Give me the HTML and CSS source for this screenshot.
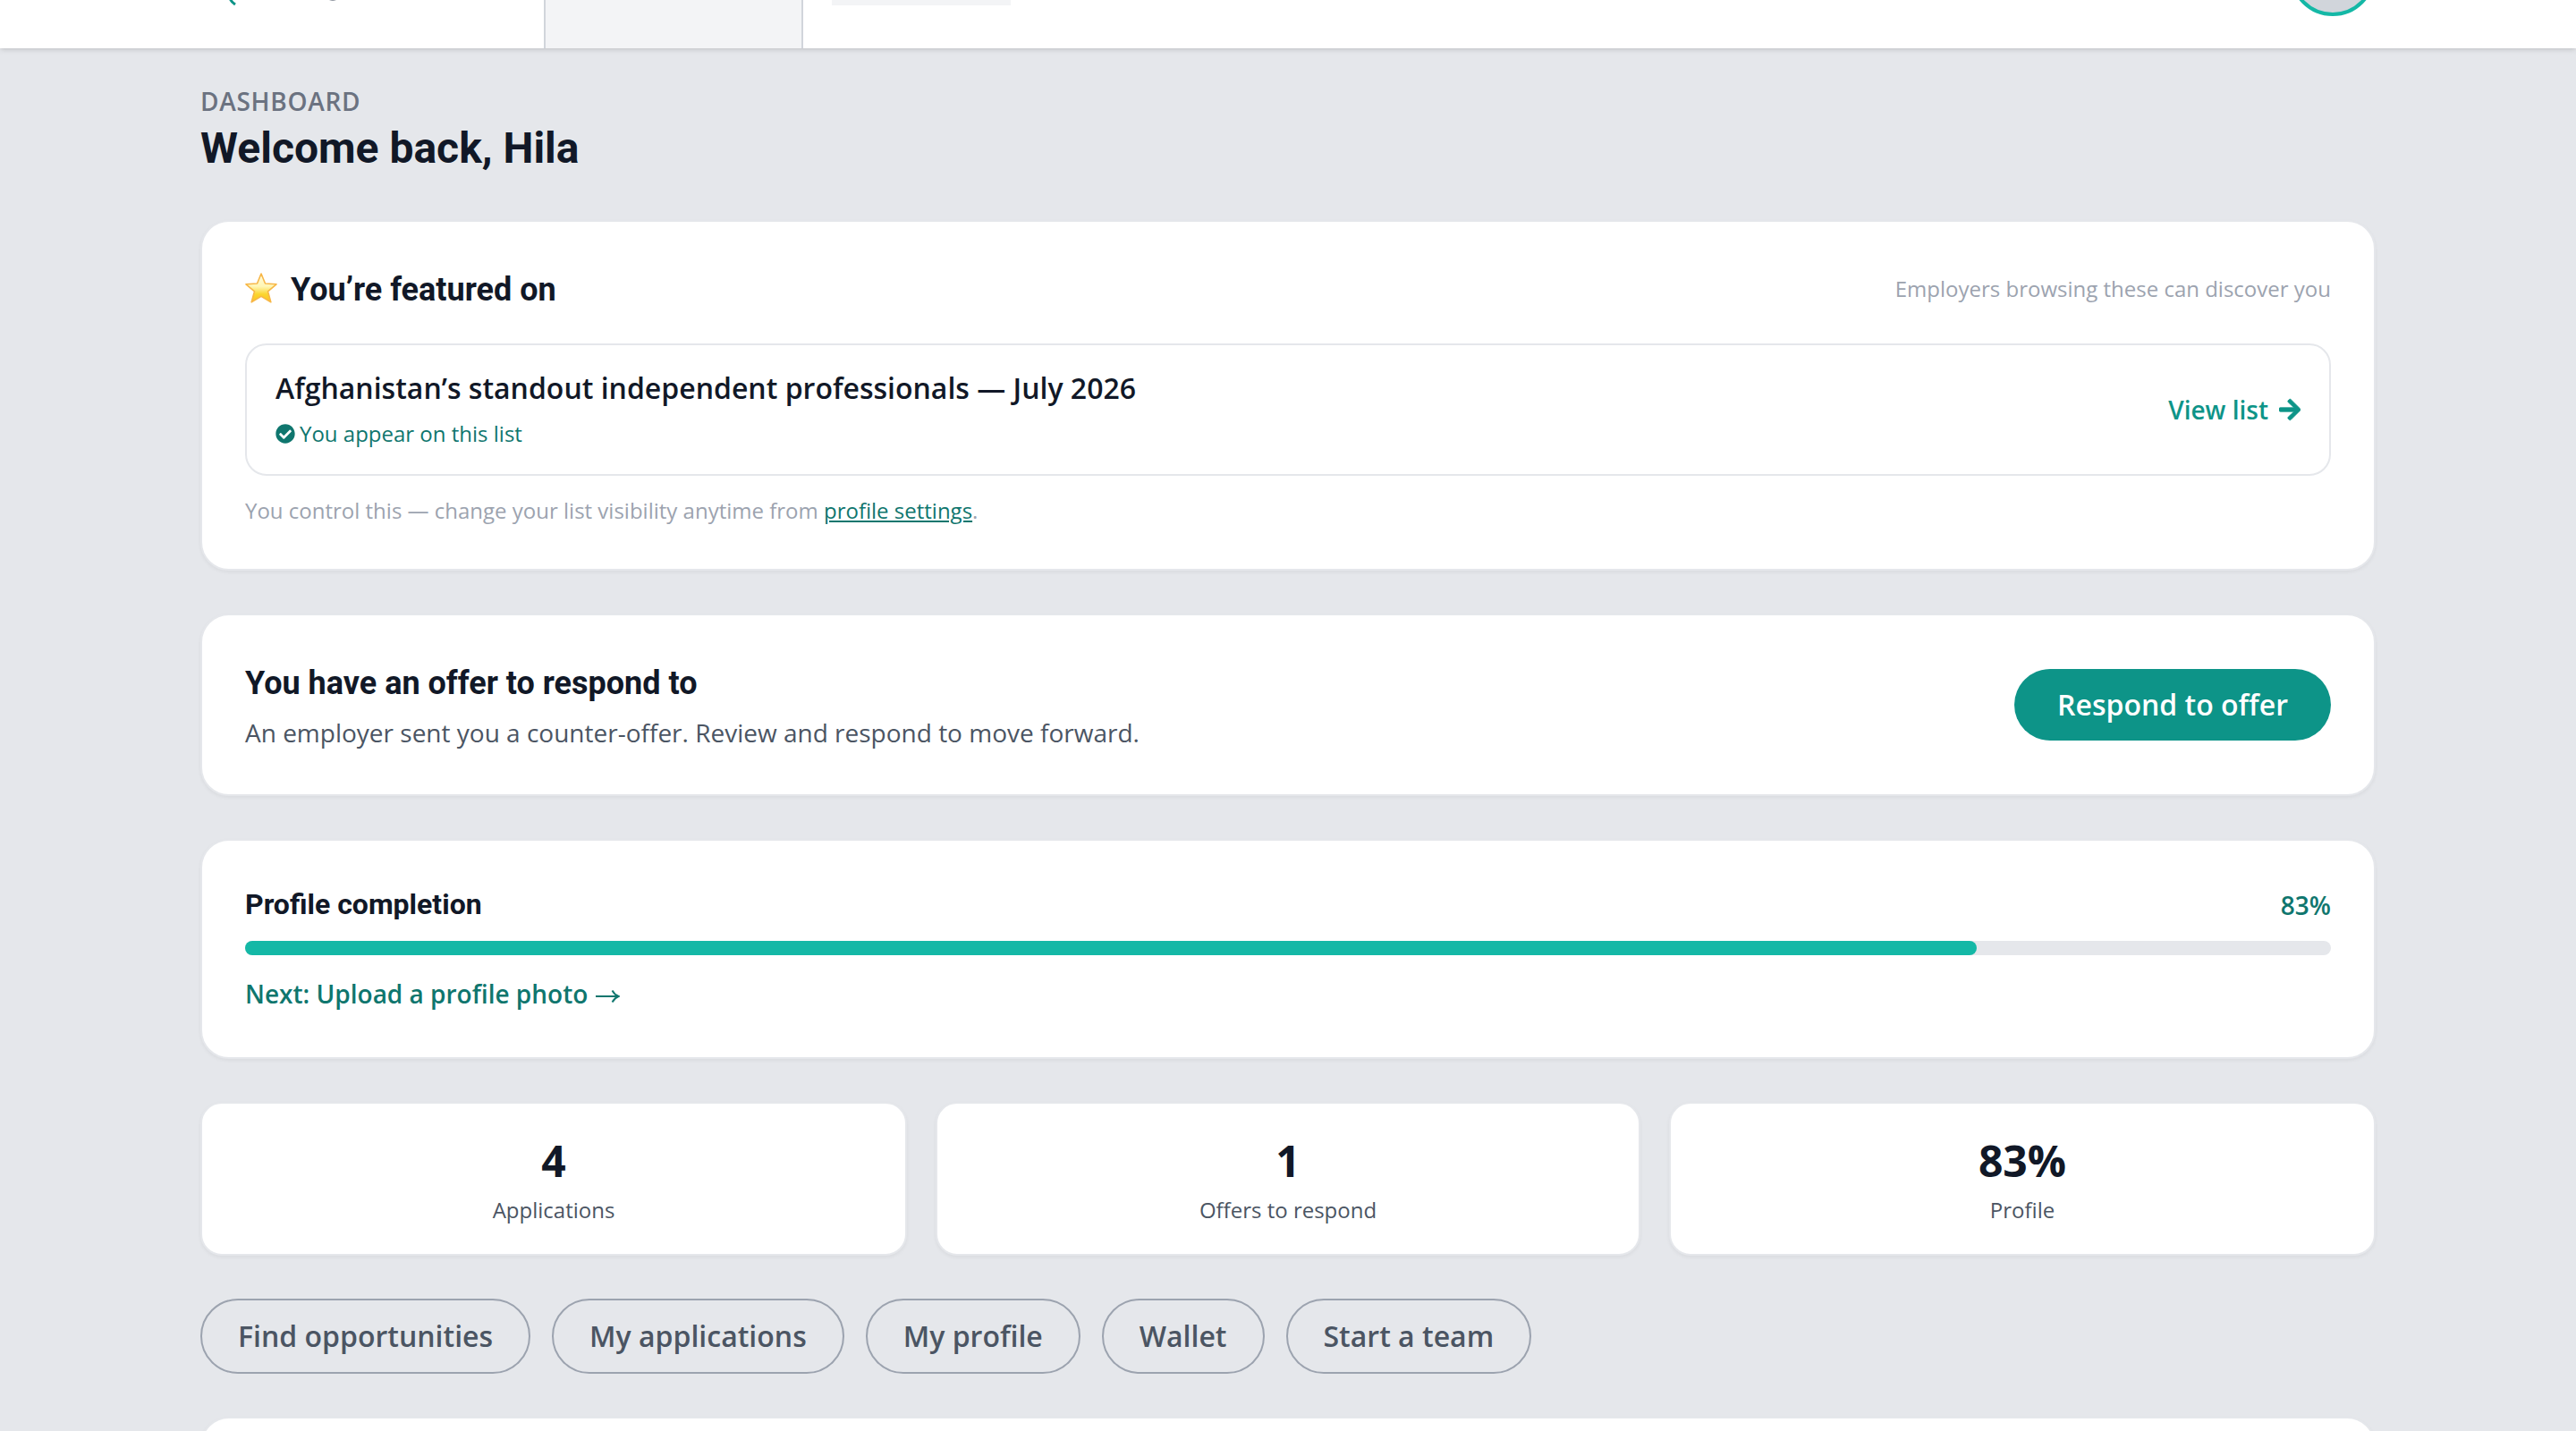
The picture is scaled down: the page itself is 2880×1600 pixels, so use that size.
FILE: index.html
```
<!DOCTYPE html>
<html lang="en">
<head>
    <meta charset="UTF-8">
    <meta name="viewport" content="width=device-width, initial-scale=1.0">
    <title>Dashboard</title>
    <link rel="stylesheet" href="styles.css">
</head>
<body>
    <header class="topbar">
        <div class="topbar-logo">
            <svg class="logo-mark" viewBox="0 0 130 6" aria-hidden="true">
                <path d="M2 -2 C3 1 5 3 8 5" fill="none" stroke="#0d9488" stroke-width="3"/>
                <path d="M113 0 Q117 1.6 121 0 Z" fill="#6b7280"/>
            </svg>
        </div>
        <div class="topbar-tab"></div>
        <div class="topbar-search"></div>
        <div class="avatar"></div>
    </header>

    <main class="container">
        <p class="eyebrow">DASHBOARD</p>
        <h1>Welcome back, Hila</h1>

        <section class="card featured">
            <div class="card-head">
                <h2 class="featured-title">
                    <svg class="star" viewBox="0 0 36 34" aria-hidden="true">
                        <defs>
                            <linearGradient id="star-fill" x1="0" y1="0" x2="0" y2="1">
                                <stop offset="0" stop-color="#fffbe0"/>
                                <stop offset="0.45" stop-color="#fff6b4"/>
                                <stop offset="0.72" stop-color="#fbd52f"/>
                                <stop offset="1" stop-color="#fbc41f"/>
                            </linearGradient>
                        </defs>
                        <path d="M18 1 L22.5 12 L35 12.8 L25.5 20.8 L28.8 32.8 L18 26.4 L7.2 32.8 L10.5 20.8 L1 12.8 L13.5 12 Z" fill="url(#star-fill)" stroke="#f7b748" stroke-width="1.6" stroke-linejoin="round"/>
                    </svg>
                    You’re featured on
                </h2>
                <span class="hint">Employers browsing these can discover you</span>
            </div>
            <a class="list-row">
                <div>
                    <div class="list-name">Afghanistan’s standout independent professionals — July 2026</div>
                    <div class="list-status">
                        <svg class="check" viewBox="0 0 512 512" aria-hidden="true"><path d="M504 256c0 136.967-111.033 248-248 248S8 392.967 8 256 119.033 8 256 8s248 111.033 248 248zM227.314 387.314l184-184c6.248-6.248 6.248-16.379 0-22.627l-22.627-22.627c-6.248-6.249-16.379-6.249-22.628 0L216 308.118l-70.059-70.059c-6.248-6.248-16.379-6.248-22.628 0l-22.627 22.627c-6.248 6.248-6.248 16.379 0 22.627l104 104c6.249 6.249 16.379 6.249 22.628.001z"/></svg>
                        You appear on this list
                    </div>
                </div>
                <span class="view-list">
                    View list
                    <svg class="arrow" viewBox="0 0 448 512" aria-hidden="true"><path d="M190.5 66.9l22.2-22.2c9.4-9.4 24.6-9.4 33.9 0L441 239c9.4 9.4 9.4 24.6 0 33.9L246.6 467.3c-9.4 9.4-24.6 9.4-33.9 0l-22.2-22.2c-9.5-9.5-9.3-25 .4-34.3L311.4 296H24c-13.3 0-24-10.7-24-24v-32c0-13.3 10.7-24 24-24h287.4L190.9 101.2c-9.8-9.3-10-24.8-.4-34.3z"/></svg>
                </span>
            </a>
            <p class="control-note">You control this — change your list visibility anytime from <a class="settings-link">profile settings</a>.</p>
        </section>

        <section class="card offer">
            <div>
                <h2>You have an offer to respond to</h2>
                <p class="offer-text">An employer sent you a counter-offer. Review and respond to move forward.</p>
            </div>
            <button type="button" class="btn-primary">Respond to offer</button>
        </section>

        <section class="card">
            <div class="progress-head">
                <h3>Profile completion</h3>
                <span class="progress-value">83%</span>
            </div>
            <div class="progress">
                <div class="progress-fill" style="width: 83%"></div>
            </div>
            <a class="next-step">
                Next: Upload a profile photo
                <svg class="thin-arrow" viewBox="0 0 28 16" aria-hidden="true">
                    <path d="M1 8 H26 M19.5 1.5 Q22 6.2 26.6 8 Q22 9.8 19.5 14.5" fill="none" stroke="currentColor" stroke-width="1.9"/>
                </svg>
            </a>
        </section>

        <div class="stats">
            <div class="stat">
                <div class="stat-value">4</div>
                <div class="stat-label">Applications</div>
            </div>
            <div class="stat">
                <div class="stat-value">1</div>
                <div class="stat-label">Offers to respond</div>
            </div>
            <div class="stat">
                <div class="stat-value">83%</div>
                <div class="stat-label">Profile</div>
            </div>
        </div>

        <nav class="actions">
            <a class="pill">Find opportunities</a>
            <a class="pill">My applications</a>
            <a class="pill">My profile</a>
            <a class="pill">Wallet</a>
            <a class="pill">Start a team</a>
        </nav>

        <section class="card"></section>
    </main>
</body>
</html>
```
FILE: styles.css
```
* {
    box-sizing: border-box;
}

body {
    margin: 0;
    height: 1600px;
    overflow: hidden;
    background-color: #e5e7eb;
    color: #111827;
    font-family: "Open Sans", "Noto Sans", sans-serif;
    font-size: 28px;
}

h1, h2, h3, p {
    margin: 0;
}

h1, h2, h3 {
    font-family: Roboto, sans-serif;
    font-weight: 700;
}

/* Top bar, only its lower edge is in view */
.topbar {
    display: flex;
    height: 54px;
    padding: 0 224px;
    background-color: #fff;
    box-shadow: 0 2px 6px rgba(0, 0, 0, 0.1), 0 2px 4px -2px rgba(0, 0, 0, 0.1);
}

.topbar-logo {
    width: 384px;
    padding-left: 31px;
}

.logo-mark {
    display: block;
    width: 130px;
    height: 6px;
}

.topbar-tab {
    width: 290px;
    border-left: 2px solid #d1d5db;
    border-right: 2px solid #d1d5db;
    background-color: #f3f4f6;
}

.topbar-search {
    width: 200px;
    height: 6px;
    margin-left: 32px;
    background-color: #f3f4f6;
}

.avatar {
    width: 96px;
    height: 96px;
    margin-top: -78px;
    margin-left: auto;
    border: 4px solid #14b8a6;
    border-radius: 50%;
    background-color: #d1d5db;
}

.container {
    width: 2432px;
    margin: 0 auto;
    padding-top: 39px;
}

.eyebrow {
    color: #6b7280;
    font-weight: 600;
    line-height: 40px;
    letter-spacing: 0.025em;
}

h1 {
    margin-bottom: 48px;
    font-size: 48px;
    line-height: 65px;
}

h2 {
    font-size: 36px;
    line-height: 56px;
}

h3 {
    margin-top: -2px;
    font-size: 32px;
    line-height: 48px;
}

.card {
    margin-bottom: 48px;
    padding: 48px;
    border: 2px solid #e5e7eb;
    border-radius: 32px;
    background-color: #fff;
    box-shadow: 0 2px 4px rgba(0, 0, 0, 0.05);
}

/* Featured list */
.featured {
    height: 392px;
}

.card-head {
    display: flex;
    align-items: center;
    justify-content: space-between;
    margin-bottom: 32px;
}

.featured-title {
    display: flex;
    align-items: center;
    gap: 15px;
}

.star {
    width: 36px;
    height: 34px;
    margin-top: -4px;
}

.hint {
    margin-top: -2px;
    color: #9ca3af;
    font-size: 24px;
    line-height: 32px;
}

.list-row {
    display: flex;
    align-items: center;
    justify-content: space-between;
    height: 148px;
    padding: 0 32px;
    border: 2px solid #e5e7eb;
    border-radius: 24px;
}

.list-name {
    font-size: 32px;
    font-weight: 600;
    line-height: 48px;
}

.list-status {
    display: flex;
    align-items: center;
    gap: 5px;
    margin-top: 7px;
    margin-bottom: 1px;
    color: #0f766e;
    font-size: 24px;
    line-height: 40px;
}

.check {
    width: 22px;
    height: 22px;
    fill: currentColor;
}

.view-list {
    display: flex;
    align-items: center;
    gap: 12px;
    color: #0d9488;
    font-weight: 600;
}

.arrow {
    width: 24px;
    height: 28px;
    fill: currentColor;
    stroke: currentColor;
    stroke-width: 16px;
}

.control-note {
    margin-top: 21px;
    color: #9ca3af;
    font-size: 24px;
    line-height: 36px;
}

.settings-link {
    color: #0f766e;
    text-decoration: underline;
}

/* Offer */
.offer {
    display: flex;
    align-items: center;
    justify-content: space-between;
}

.offer-text {
    margin-top: 6px;
    color: #4b5563;
    line-height: 42px;
}

.btn-primary {
    height: 80px;
    padding: 0 48px 2px;
    border: none;
    border-radius: 40px;
    background-color: #0d9488;
    color: #fff;
    font-family: inherit;
    font-size: 32px;
    font-weight: 600;
}

/* Profile completion */
.progress-head {
    display: flex;
    align-items: center;
    justify-content: space-between;
    height: 48px;
    margin-bottom: 16px;
}

.progress-value {
    margin-top: -1px;
    color: #0f766e;
    font-weight: 600;
}

.progress {
    height: 16px;
    border-radius: 8px;
    background-color: #e5e7eb;
}

.progress-fill {
    height: 16px;
    border-radius: 8px;
    background-color: #14b8a6;
}

.next-step {
    display: flex;
    align-items: center;
    gap: 8px;
    margin: 22px 0 2px;
    color: #0f766e;
    font-weight: 600;
    line-height: 42px;
}

.thin-arrow {
    width: 28px;
    height: 16px;
    margin-top: 6px;
}

/* Stat tiles */
.stats {
    display: grid;
    grid-template-columns: 790px 788px 790px;
    gap: 32px;
    margin-bottom: 48px;
}

.stat {
    height: 172px;
    padding-top: 32px;
    border: 2px solid #e5e7eb;
    border-radius: 24px;
    background-color: #fff;
    text-align: center;
    box-shadow: 0 2px 4px rgba(0, 0, 0, 0.05);
}

.stat-value {
    font-size: 48px;
    font-weight: 700;
    line-height: 64px;
}

.stat-label {
    margin-top: 5px;
    color: #4b5563;
    font-size: 24px;
    line-height: 36px;
}

/* Quick actions */
.actions {
    display: flex;
    gap: 24px;
    margin-bottom: 48px;
}

.pill {
    padding: 0 40px;
    border: 2px solid #9ca3af;
    border-radius: 42px;
    color: #4b5563;
    font-size: 32px;
    font-weight: 600;
    line-height: 80px;
}
```
